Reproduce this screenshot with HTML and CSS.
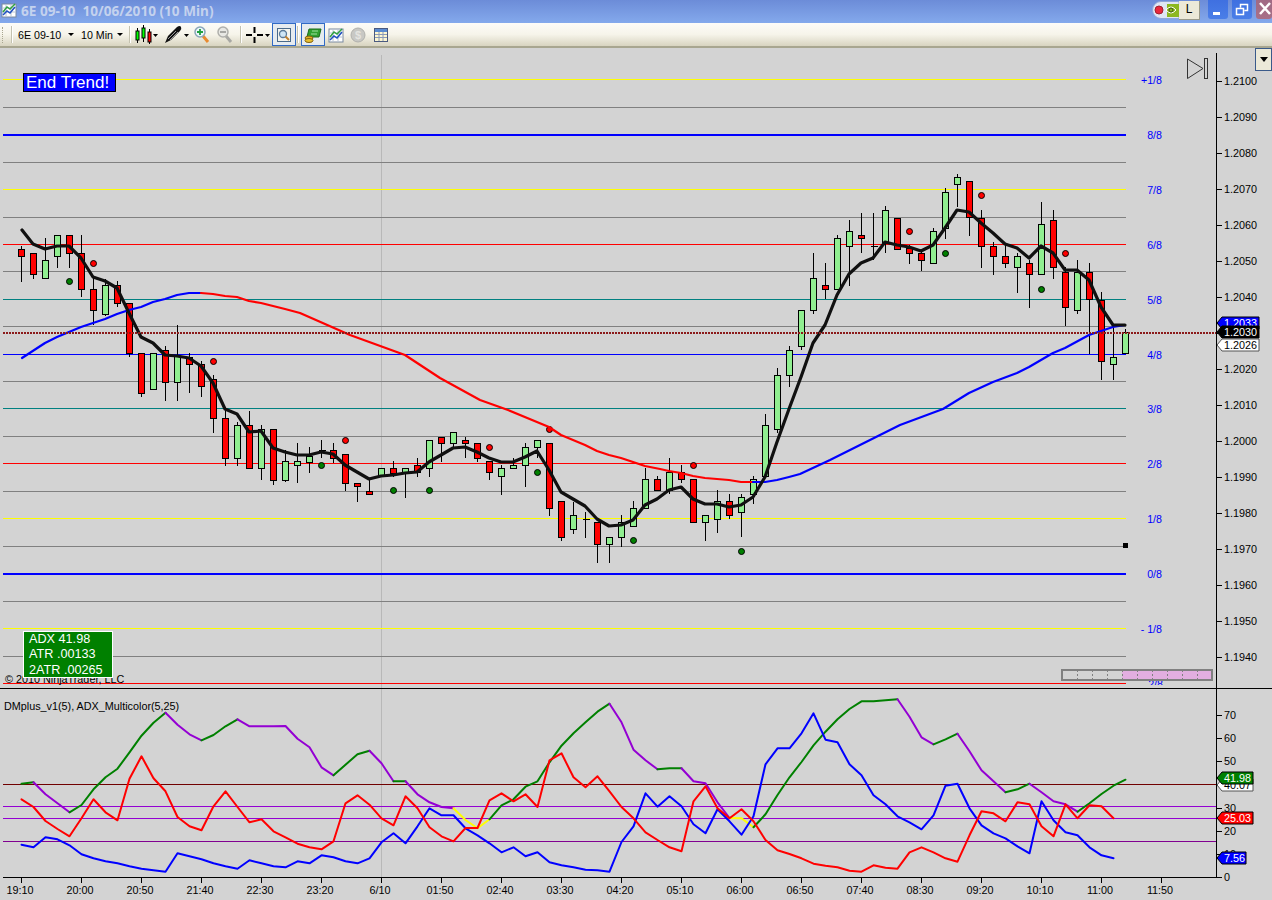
FILE: index.html
```html
<!DOCTYPE html>
<html lang="en">
<head>
    <meta charset="UTF-8">
    <title>6E 09-10 10/06/2010 (10 Min)</title>
    <link rel="stylesheet" href="styles.css">
</head>
<body>
    <div class="titlebar">
        <svg class="app-icon" width="16" height="16" viewBox="0 0 16 16">
            <rect x="1" y="2" width="14" height="13" fill="#fff" stroke="#7a8aa0"/>
            <path d="M1 6h14M1 10h14M5 2v13M10 2v13" stroke="#b8c4d4" fill="none"/>
            <path d="M2 13l4-4 3 2 5-6" stroke="#2050c0" stroke-width="1.5" fill="none"/>
            <path d="M2 10l4-5 3 2 5-5" stroke="#30a040" stroke-width="1.5" fill="none"/>
        </svg>
        <span class="title">6E 09-10&nbsp;&nbsp;10/06/2010 (10 Min)</span>
        <div class="tray">
            <svg width="27" height="18" viewBox="0 0 27 18">
                <path d="M9 0.5h18v17H9a8.5 8.5 0 0 1 0-17z" fill="#dfe6f3" stroke="#8fa6d8"/>
                <circle cx="7" cy="9" r="4" fill="#e8283c" stroke="#a02030"/>
                <rect x="15" y="3" width="12" height="13" fill="#8cb820"/>
                <path d="M14 9q5-6 10 0q-5 6-10 0z" fill="none" stroke="#fff"/>
                <circle cx="19" cy="9" r="2" fill="none" stroke="#3e5a10"/>
            </svg>
            <span class="tray-tip">L</span>
        </div>
        <div class="winbtn">
            <svg width="20" height="19" viewBox="0 0 20 19"><rect x="5" y="12" width="7" height="3" fill="#fff"/></svg>
        </div>
        <div class="winbtn">
            <svg width="20" height="19" viewBox="0 0 20 19"><path d="M8.5 7.5v-3h7v6h-3M4.5 8.500h7v6h-7z" fill="none" stroke="#fff" stroke-width="1.5"/></svg>
        </div>
        <div class="winbtn close">
            <svg width="16" height="19" viewBox="0 0 16 19"><path d="M4 3l10 11M14 3L4 14" stroke="#fff" stroke-width="2.5"/></svg>
        </div>
    </div>

    <div class="toolbar">
        <span class="grip"></span>
        <span class="sep first"></span>
        <span class="combo symbol">6E 09-10<i class="caret"></i></span>
        <span class="combo period">10 Min<i class="caret"></i></span>
        <span class="sep s2"></span>
        <svg class="t-candles" width="24" height="20" viewBox="0 0 24 20">
            <path d="M3.5 3v15M9.5 0v17M15.5 4v15" stroke="#000"/>
            <rect x="2" y="6" width="3" height="9" fill="#0f0" stroke="#000"/>
            <rect x="8" y="3" width="3" height="10" fill="#0f0" stroke="#000"/>
            <rect x="14" y="7" width="3" height="10" fill="#f00" stroke="#000"/>
            <path d="M19 9h5l-2.5 3z" fill="#000"/>
        </svg>
        <svg class="t-pen" width="26" height="20" viewBox="0 0 26 20">
            <path d="M1 18l3-7L13 2q3-2 4 0t-1 4l-9 9z" fill="#111"/>
            <path d="M4 14l8-8M6 15l8-8" stroke="#999"/>
            <path d="M20 9h5l-2.5 3z" fill="#000"/>
        </svg>
        <svg class="t-zoomin" width="16" height="18" viewBox="0 0 16 18">
            <path d="M9 10l5 6" stroke="#e88a30" stroke-width="3"/>
            <circle cx="6" cy="6" r="5" fill="#eef6fb" stroke="#8aa6b8" stroke-width="1.5"/>
            <path d="M3 6h6M6 3v6" stroke="#20a040" stroke-width="1.8"/>
        </svg>
        <svg class="t-zoomout" width="16" height="18" viewBox="0 0 16 18">
            <path d="M9 10l5 6" stroke="#a8a8a4" stroke-width="3"/>
            <circle cx="6" cy="6" r="5" fill="#e8e8e4" stroke="#b0b0ac" stroke-width="1.5"/>
            <path d="M3 6h6" stroke="#a0a09c" stroke-width="1.8"/>
        </svg>
        <span class="sep s3"></span>
        <svg class="t-cross" width="26" height="18" viewBox="0 0 26 18">
            <path d="M1 9h6M12 9h6M9.5 1v6M9.5 11v6" stroke="#000" stroke-width="2"/>
            <path d="M20 8h5l-2.5 3z" fill="#000"/>
        </svg>
        <span class="tbtn b1">
            <svg width="16" height="16" viewBox="0 0 16 16">
                <rect x="1.5" y="1.5" width="13" height="13" fill="#f4f4ee" stroke="#4a6a8a"/>
                <circle cx="7" cy="7" r="3.5" fill="#cfe6f6" stroke="#5a7a9a" stroke-width="1.3"/>
                <path d="M9.5 9.5l3.5 3.5" stroke="#c08030" stroke-width="2"/>
            </svg>
        </span>
        <span class="sep s4"></span>
        <span class="tbtn b2">
            <svg width="18" height="16" viewBox="0 0 18 16">
                <path d="M5 2h12l-2 8H3z" fill="#30a030" stroke="#1a6a1a"/>
                <path d="M8 4h6M7 7h6" stroke="#a0e0a0"/>
                <ellipse cx="5" cy="11" rx="4" ry="2" fill="#e0b020" stroke="#806010"/>
                <ellipse cx="5" cy="13.5" rx="4" ry="2" fill="#e8c030" stroke="#806010"/>
            </svg>
        </span>
        <svg class="t-chart" width="16" height="16" viewBox="0 0 16 16">
            <rect x="1" y="2" width="14" height="13" fill="#fff" stroke="#7a8aa0"/>
            <path d="M1 6h14M1 10h14M5 2v13M10 2v13" stroke="#b8c4d4" fill="none"/>
            <path d="M2 13l4-4 3 2 5-6" stroke="#2050c0" stroke-width="1.5" fill="none"/>
            <path d="M2 10l4-5 3 2 5-5" stroke="#30a040" stroke-width="1.5" fill="none"/>
        </svg>
        <svg class="t-dollar" width="16" height="16" viewBox="0 0 16 16">
            <circle cx="8" cy="8" r="7" fill="#c8c8c4" stroke="#b0b0ac"/>
            <text class="dollar-sign" x="8" y="12">$</text>
        </svg>
        <svg class="t-table" width="16" height="16" viewBox="0 0 16 16">
            <rect x="1.5" y="1.5" width="13" height="13" fill="#fdf6d0" stroke="#4a5a80"/>
            <rect x="2" y="2" width="12" height="3" fill="#5a8ad0"/>
            <path d="M2 7.5h12M2 10.5h12M6 5v9M10 5v9" stroke="#8a9ab8"/>
        </svg>
    </div>

    <div class="chart">
        <svg id="plot" width="1272" height="852" viewBox="0 48 1272 852"></svg>
        <div class="signal">End Trend!</div>
        <div class="stats">
            <div>ADX 41.98</div>
            <div>ATR .00133</div>
            <div>2ATR .00265</div>
        </div>
        <div class="corner-btn"><i></i></div>
    </div>
    <script src="chart.js"></script>
</body>
</html>
```

FILE: styles.css
```css
html, body {
    margin: 0;
    padding: 0;
}
body {
    width: 1272px;
    height: 900px;
    overflow: hidden;
    font-family: "Liberation Sans", Arial, sans-serif;
    background-color: #d3d3d3;
}
.titlebar {
    display: flex;
    align-items: flex-start;
    height: 23px;
    background: linear-gradient(#6c8cd8, #84a9ec);
}
.app-icon {
    margin: 2px 0 0 1px;
}
.title {
    margin: 2px 0 0 4px;
    font-family: "Noto Sans", sans-serif;
    font-weight: bold;
    font-size: 13.6px;
    line-height: 17px;
    color: #c4d2ee;
}
.tray {
    display: flex;
    margin: 1px 8px 0 auto;
}
.tray-tip {
    width: 20px;
    height: 18px;
    background-color: #ece9d8;
    border-right: 1px solid #9a9a8a;
    border-bottom: 1px solid #9a9a8a;
    font-size: 12px;
    line-height: 17px;
    text-align: center;
    color: #000;
}
.winbtn {
    display: flex;
    width: 20px;
    height: 19px;
    margin-right: 4px;
    background: linear-gradient(#3f70e0, #4a7ee8);
    border-radius: 0 0 3px 3px;
}
.winbtn.close {
    width: 16px;
    margin-right: 0;
    background: linear-gradient(#a06a84, #a87088);
}

.toolbar {
    display: flex;
    align-items: center;
    box-sizing: border-box;
    height: 25px;
    padding-left: 2px;
    background: linear-gradient(#fdfcf8, #f6f4ea 50%, #d8d4c0);
    border-bottom: 2px solid #a8a690;
    font-size: 10.67px;
    color: #000;
}
.grip {
    width: 2px;
    height: 16px;
    border-left: 1px dotted #a8a690;
}
.sep {
    width: 1px;
    height: 17px;
    background-color: #c4c2b0;
    border-right: 1px solid #fff;
}
.sep.first { margin-left: 6px; }
.sep.s2 { margin-left: 6px; }
.sep.s3 { margin-left: 7px; }
.sep.s4 { margin-left: 1px; }
.combo {
    display: flex;
    justify-content: space-between;
    align-items: center;
    box-sizing: border-box;
}
.combo.symbol {
    width: 56px;
    margin-left: 5px;
}
.combo.period {
    width: 42px;
    margin-left: 7px;
}
.caret {
    width: 0;
    height: 0;
    border-left: 3px solid transparent;
    border-right: 3px solid transparent;
    border-top: 3px solid #000;
}
.t-candles { margin-left: 3px; }
.t-pen { margin-left: 6px; }
.t-zoomin { margin-left: 4px; }
.t-zoomout { margin-left: 7px; }
.t-cross { margin-left: 3px; }
.t-chart { margin-left: 3px; }
.t-dollar { margin-left: 6px; }
.t-table { margin-left: 7px; }
.tbtn {
    display: flex;
    justify-content: center;
    align-items: center;
    box-sizing: border-box;
    width: 24px;
    height: 23px;
    background-color: #e6ebef;
    border: 1px solid #316ac5;
}
.tbtn.b1 { margin-left: 1px; }
.tbtn.b2 { margin-left: 2px; }
.dollar-sign {
    font-size: 11px;
    font-weight: bold;
    text-anchor: middle;
    fill: #e4e4e0;
}

.chart {
    position: relative;
    height: 852px;
}
#plot {
    display: block;
}
.signal {
    position: absolute;
    left: 23px;
    top: 25px;
    box-sizing: border-box;
    width: 93px;
    height: 19px;
    padding-left: 2px;
    background-color: #0000ff;
    border: 1px solid #000;
    font-size: 17px;
    line-height: 17px;
    color: #fff;
}
.stats {
    position: absolute;
    left: 23px;
    top: 583px;
    box-sizing: border-box;
    width: 90px;
    height: 47px;
    padding-left: 5px;
    background-color: #008000;
    border: 1px solid #fff;
    font-size: 12.67px;
    line-height: 15.3px;
    color: #fff;
}
.corner-btn {
    position: absolute;
    left: 1255px;
    top: 0;
    display: flex;
    justify-content: center;
    box-sizing: border-box;
    width: 17px;
    height: 23px;
    padding-top: 8px;
    background-color: #ece9d8;
    border: 1px solid #3a5a8a;
}
.corner-btn i {
    width: 0;
    height: 0;
    border-left: 4px solid transparent;
    border-right: 4px solid transparent;
    border-top: 5px solid #000;
}

/* chart lines */
.lv { shape-rendering: crispEdges; stroke-width: 1; }
.lv.thick { stroke-width: 2; }
.gray { stroke: #808080; }
.yellow { stroke: #ffff00; }
.blue { stroke: #0000ff; }
.red { stroke: #ff0000; }
.teal { stroke: #008080; }
.maroon { stroke: #700000; }
.violet { stroke: #9400d3; }
.darkviolet { stroke: #800090; }
.sep-line { stroke: #b8b8b8; }
.black { stroke: #000; }
.dotted {
    stroke: #8b1a1a;
    stroke-width: 2;
    stroke-dasharray: 2 1;
}
.wick { stroke: #000; shape-rendering: crispEdges; }
.body { stroke: #000; shape-rendering: crispEdges; }
.body.up { fill: #90ee90; }
.body.dn { fill: #ff0000; }
.dot { stroke: #000; }
.dot.up { fill: #008000; }
.dot.dn { fill: #ff0000; }
.curve {
    fill: none;
    stroke-linejoin: round;
    stroke-linecap: round;
}
.ma5 { stroke: #101010; stroke-width: 3.2; }
.ma-up { stroke: #0000ff; stroke-width: 2.2; }
.ma-dn { stroke: #ff0000; stroke-width: 2.2; }
.sub { stroke-width: 2; }
.adx-g { stroke: #008000; }
.adx-p { stroke: #9400d3; }
.adx-y { stroke: #ffff00; }
.marker { fill: #000; }
.skip { fill: none; stroke: #333; }

/* chart text */
text.axis { font-size: 10.8px; fill: #000; }
text.mid { text-anchor: middle; }
text.frac { font-size: 10.67px; fill: #0000ff; text-anchor: end; }
text.note { font-size: 10.8px; fill: #000; }
text.flag-text { font-size: 10.8px; fill: #fff; }
text.flag-text.ink { fill: #000; }

/* price flags */
.flag { stroke: #000; }
.flag.f-blue { fill: #0000ff; }
.flag.f-black { fill: #000; }
.flag.f-white { fill: #fff; stroke: #555; }
.flag.f-green { fill: #008000; }
.flag.f-red { fill: #ff0000; }

/* data box bottom right */
.cell { stroke: #808080; stroke-dasharray: 2 2; shape-rendering: crispEdges; }
.cell.old { fill: #d3d3d3; }
.cell.new { fill: #e2aee0; }
.cell-frame { fill: none; stroke: #808080; stroke-width: 1.5; shape-rendering: crispEdges; }
```

FILE: chart.js
```js
const plot = document.getElementById('plot');
const LEFT = 3;
const BAR0 = 21.5;
const STEP = 12;
let out = '';

function barX(i) {
    return BAR0 + STEP * i;
}

function hline(y, x2, cls, thick) {
    const py = thick ? y + 1 : y + 0.5;
    out += `<line class="lv ${cls}${thick ? ' thick' : ''}" x1="${LEFT}" x2="${x2}" y1="${py}" y2="${py}"/>`;
}

function poly(points, cls) {
    const pts = points.map(p => p.join(',')).join(' ');
    out += `<polyline class="curve ${cls}" points="${pts}"/>`;
}

function label(x, y, text, cls) {
    out += `<text class="${cls}" x="${x}" y="${y}">${text}</text>`;
}

function flag(y, right, text, cls, ink) {
    const pts = `1217,${y} 1222,${y - 6} ${right},${y - 6} ${right},${y + 6} 1222,${y + 6}`;
    out += `<polygon class="flag ${cls}" points="${pts}"/>`;
    label(1224, y + 4, text, 'flag-text' + (ink ? ' ink' : ''));
}

// grid levels: row, colour, thick
const levels = [
    [79, 'yellow'], [107, 'gray'], [134, 'blue', 1], [162, 'gray'], [189, 'yellow'],
    [217, 'gray'], [244, 'red'], [271, 'gray'], [299, 'teal'], [326, 'gray'],
    [354, 'blue'], [381, 'gray'], [408, 'teal'], [436, 'gray'], [463, 'red'],
    [491, 'gray'], [518, 'yellow'], [546, 'gray'], [573, 'blue', 1], [601, 'gray'],
    [628, 'yellow'], [656, 'gray'], [683, 'red']
];

const fractions = [
    ['+1/8', 84], ['8/8', 139], ['7/8', 194], ['6/8', 249], ['5/8', 304], ['4/8', 359],
    ['3/8', 413], ['2/8', 468], ['1/8', 523], ['0/8', 578], ['- 1/8', 633]
];

// high, body top, body bottom, low, up or down (pixel rows)
const bars = [
    [246,249,256,282,'d'],[253,253,274,279,'d'],[238,260,278,278,'u'],[235,235,256,268,'u'],
    [235,235,253,268,'d'],[235,253,289,297,'d'],[278,289,310,325,'d'],[279,285,314,316,'u'],
    [281,285,303,307,'d'],[303,303,353,357,'d'],[353,353,393,397,'d'],[353,353,389,389,'u'],
    [346,350,382,401,'d'],[325,356,382,401,'u'],[353,357,364,393,'d'],[361,364,386,397,'d'],
    [375,379,418,433,'d'],[409,418,458,466,'d'],[422,425,458,466,'u'],[411,425,468,468,'d'],
    [425,429,468,480,'u'],[429,429,480,485,'d'],[450,461,480,482,'u'],[443,461,465,483,'u'],
    [447,456,462,473,'u'],[440,450,450,458,'d'],[443,450,458,463,'d'],[454,454,483,491,'d'],
    [483,483,486,502,'d'],[479,491,494,494,'d'],[468,468,475,475,'u'],[461,468,473,477,'d'],
    [468,468,472,498,'u'],[458,465,472,477,'d'],[440,440,468,477,'u'],[437,437,443,462,'d'],
    [432,432,443,447,'u'],[437,440,443,458,'d'],[443,443,458,462,'d'],[461,461,472,480,'d'],
    [465,468,476,495,'u'],[458,465,468,468,'u'],[443,447,465,487,'u'],[440,440,447,458,'u'],
    [443,443,508,516,'d'],[501,501,537,541,'d'],[502,515,529,534,'u'],[512,519,519,538,'d'],
    [522,522,544,563,'d'],[537,537,544,563,'u'],[515,522,537,547,'u'],[501,508,526,526,'u'],
    [468,479,508,508,'u'],[476,479,490,490,'d'],[458,472,490,494,'u'],[465,472,479,483,'d'],
    [479,479,522,522,'d'],[515,515,522,541,'u'],[490,501,519,533,'u'],[494,501,515,519,'d'],
    [494,497,512,537,'u'],[476,479,494,504,'u'],[414,425,476,476,'u'],[368,375,429,433,'u'],
    [346,350,375,387,'u'],[310,310,346,350,'u'],[253,278,310,314,'u'],[263,285,289,299,'d'],
    [235,238,289,289,'u'],[220,231,246,286,'u'],[213,235,238,253,'d'],[213,246,246,260,'d'],
    [206,210,243,253,'u'],[218,218,249,249,'d'],[245,248,253,264,'d'],[249,253,260,271,'d'],
    [228,231,263,263,'u'],[188,192,228,239,'u'],[174,177,184,207,'u'],[181,181,217,236,'d'],
    [210,218,246,268,'d'],[242,246,256,275,'d'],[243,256,263,268,'d'],[253,256,267,293,'u'],
    [260,263,274,308,'d'],[202,224,274,274,'u'],[210,220,267,279,'d'],[267,272,307,326,'d'],
    [260,272,310,314,'u'],[263,272,299,354,'d'],[292,300,361,380,'d'],[327,357,364,380,'u'],
    [329,332,353,353,'u']
];

const ma5 = [
    [22,230],[33,244],[45,249],[57,246],[69,246],[81,258],[93,277],[105,281],[117,288],[129,313],
    [141,337],[153,343],[165,355],[177,356],[189,358],[201,366],[213,383],[225,409],[237,414],
    [249,432],[261,431],[273,448],[285,452],[297,455],[309,455],[321,452],[333,454],[345,465],
    [357,472],[369,479],[381,476],[393,475],[405,473],[417,472],[429,462],[441,455],[453,448],
    [465,447],[477,452],[489,458],[501,462],[513,462],[525,457],[537,451],[549,470],[561,492],
    [573,499],[585,506],[597,519],[609,526],[621,525],[633,520],[645,505],[657,499],[669,490],
    [681,487],[693,499],[705,504],[717,504],[729,507],[741,505],[753,497],[765,477],[777,442],
    [789,409],[801,377],[813,343],[825,325],[837,295],[849,274],[861,263],[873,258],[885,242],
    [897,245],[909,247],[921,251],[933,245],[945,228],[957,210],[969,212],[981,223],[993,233],
    [1005,244],[1017,248],[1029,258],[1041,246],[1053,253],[1065,270],[1077,270],[1089,280],
    [1101,307],[1113,325],[1125,325]
];

const maUp1 = [
    [22,358],[45,343],[57,337],[69,332],[81,327],[93,323],[105,319],[117,314],[129,310],[141,307],
    [153,302],[165,299],[177,295],[189,293],[201,293]
];
const maDn = [
    [201,293],[213,294],[225,296],[237,297],[249,301],[261,303],[273,306],[285,309],[300,313],
    [350,335],[405,355],[440,378],[480,400],[508,410],[549,427],[561,435],[573,440],[585,445],
    [597,451],[609,455],[621,458],[633,462],[645,466],[660,469],[669,471],[681,473],[693,476],
    [705,478],[717,479],[729,480],[741,482],[753,482]
];
const maUp2 = [
    [753,482],[765,482],[777,480],[789,477],[800,474],[830,460],[860,445],[900,425],[943,409],
    [969,393],[993,382],[1017,373],[1029,367],[1053,353],[1065,348],[1089,335],[1101,331],
    [1113,327],[1125,325]
];

const dots = [
    [93,263,'dn'],[213,361,'dn'],[345,440,'dn'],[489,447,'dn'],[549,429,'dn'],[693,465,'dn'],
    [909,231,'dn'],[981,195,'dn'],[1065,253,'dn'],[69,281,'up'],[321,465,'up'],[393,490,'up'],
    [429,490,'up'],[537,472,'up'],[633,540,'up'],[741,551,'up'],[945,253,'up'],[1041,289,'up']
];

// lower panel series, one value per bar, rows measured from y = 690 at 3x
const adx = [
    281,277,313,340,367,345,298,262,236,187,137,98,68,104,133,151,135,109,88,109,109,109,108,146,
    172,232,256,224,193,182,220,274,274,313,337,351,355,390,415,388,346,328,290,274,217,167,130,
    97,65,41,97,179,211,238,235,235,274,280,337,384,385,412,373,315,262,216,166,125,88,57,34,34,
    31,28,80,142,163,148,131,184,241,274,307,298,281,307,334,343,365,340,312,287,269
];
const diPlus = [
    328,351,393,417,439,385,328,367,391,266,199,265,304,381,409,421,349,304,351,397,388,424,442,
    461,472,478,454,340,316,344,385,406,319,355,412,439,454,414,414,331,310,334,313,351,211,190,
    262,292,259,304,351,385,427,450,472,484,334,289,355,385,358,394,450,481,492,505,521,527,532,
    542,545,526,533,536,487,472,487,505,515,436,364,370,394,337,343,409,439,343,385,346,349,385
];
const diMinus = [
    464,472,442,448,466,493,505,514,520,529,536,541,545,490,499,508,520,529,536,511,520,529,532,
    514,520,496,502,514,520,505,457,430,460,409,355,376,376,415,436,460,487,472,499,487,517,526,
    532,539,541,545,456,409,310,350,319,349,403,430,358,394,434,379,223,175,175,130,70,149,157,
    223,256,316,343,379,397,418,376,287,281,355,406,430,445,469,490,334,391,427,436,472,496,505
];
// bar ranges of the ADX line by colour: from, to, class
const adxRuns = [
    [0,1,'adx-g'],[1,4,'adx-p'],[4,12,'adx-g'],[12,15,'adx-p'],[15,18,'adx-g'],[18,26,'adx-p'],
    [26,29,'adx-g'],[29,31,'adx-p'],[31,32,'adx-g'],[32,36,'adx-p'],[36,39,'adx-y'],[39,49,'adx-g'],
    [49,53,'adx-p'],[53,55,'adx-g'],[55,59,'adx-p'],[59,61,'adx-y'],[61,73,'adx-g'],[73,76,'adx-p'],
    [76,78,'adx-g'],[78,82,'adx-p'],[82,84,'adx-g'],[84,88,'adx-p'],[88,92,'adx-g']
];

function subPoints(values) {
    return values.map((v, i) => [barX(i), +(690 + v / 3).toFixed(1)]);
}

// --- upper panel ---
out += `<line class="lv sep-line" x1="381.5" x2="381.5" y1="55" y2="877"/>`;
levels.forEach(l => hline(l[0], 1126, l[1], l[2]));

out += `<clipPath id="upper"><rect x="0" y="48" width="1216" height="637"/></clipPath>`;
fractions.forEach(f => label(1162, f[1], f[0], 'frac'));
out += `<text class="frac" x="1163" y="688" clip-path="url(#upper)">-2/8</text>`;

bars.forEach((b, i) => {
    const x = barX(i);
    out += `<line class="wick" x1="${x}" x2="${x}" y1="${b[0]}" y2="${b[3]}"/>`;
    if (b[1] === b[2]) {
        out += `<line class="wick" x1="${x - 3}" x2="${x + 4}" y1="${b[1] + 0.5}" y2="${b[1] + 0.5}"/>`;
    } else {
        const cls = b[4] === 'u' ? 'up' : 'dn';
        out += `<rect class="body ${cls}" x="${x - 3}" y="${b[1] + 0.5}" width="6" height="${b[2] - b[1]}"/>`;
    }
});

dots.forEach(d => {
    out += `<circle class="dot ${d[2]}" cx="${d[0] + 0.5}" cy="${d[1] + 0.5}" r="3"/>`;
});
out += `<rect class="marker" x="1123" y="543" width="5" height="5"/>`;

poly(maUp1, 'ma-up');
poly(maDn, 'ma-dn');
poly(maUp2, 'ma-up');
poly(ma5, 'ma5');

out += `<line class="lv dotted" x1="${LEFT}" x2="1216" y1="332.5" y2="332.5"/>`;

label(5, 683, '© 2010 NinjaTrader, LLC', 'note');

// skip to end button
out += `<path class="skip" d="M1187.5 59v19.5l15.5-10z"/><rect class="skip" x="1204.5" y="58.5" width="3" height="20"/>`;

// data box
for (let i = 0; i < 10; i++) {
    out += `<rect class="cell ${i < 4 ? 'old' : 'new'}" x="${1062 + i * 15}" y="670" width="15" height="10"/>`;
}
out += `<rect class="cell-frame" x="1062" y="670" width="150" height="10"/>`;

// --- price axis ---
for (let i = 0; i <= 16; i++) {
    const y = 81 + i * 36;
    const price = (1.21 - i * 0.001).toFixed(4);
    out += `<line class="lv black" x1="1217" x2="1222" y1="${y + 0.5}" y2="${y + 0.5}"/>`;
    label(1224, y + 4, price, 'axis');
}

flag(323, 1259, '1.2033', 'f-blue');
flag(332, 1259, '1.2030', 'f-black');
flag(345, 1259, '1.2026', 'f-white', true);

out += `<line class="lv black" x1="0" x2="1272" y1="688.5" y2="688.5"/>`;
label(4, 710, 'DMplus_v1(5), ADX_Multicolor(5,25)', 'note');

// --- lower panel ---
hline(784, 1216, 'maroon');
hline(806, 1216, 'violet');
hline(818, 1216, 'violet');
hline(841, 1216, 'darkviolet');

const adxPts = subPoints(adx);
adxRuns.forEach(r => poly(adxPts.slice(r[0], r[1] + 1), 'sub ' + r[2]));
poly(subPoints(diMinus), 'sub blue');
poly(subPoints(diPlus), 'sub red');

[70, 60, 50, 40, 30, 20, 10, 0].forEach((v, i) => {
    const y = Math.round(715 + i * 23.2);
    out += `<line class="lv black" x1="1217" x2="1222" y1="${y + 0.5}" y2="${y + 0.5}"/>`;
    label(1224, y + 4, v, 'axis');
});

flag(785, 1253, '40.07', 'f-white', true);
flag(778, 1253, '41.98', 'f-green');
flag(818, 1253, '25.03', 'f-red');
flag(858, 1246, '7.56', 'f-blue');

// --- time axis ---
const times = ['19:10','20:00','20:50','21:40','22:30','23:20','6/10','01:50','02:40','03:30',
    '04:20','05:10','06:00','06:50','07:40','08:30','09:20','10:10','11:00','11:50'];
out += `<line class="lv black" x1="${LEFT}" x2="1217" y1="877.5" y2="877.5"/>`;
out += `<line class="lv black" x1="1216.5" x2="1216.5" y1="53" y2="878"/>`;
times.forEach((t, i) => {
    const x = barX(i * 5);
    out += `<line class="lv black" x1="${x}" x2="${x}" y1="878" y2="883"/>`;
    label(x - 1.5, 894, t, 'axis mid');
});

plot.innerHTML = out;
```
